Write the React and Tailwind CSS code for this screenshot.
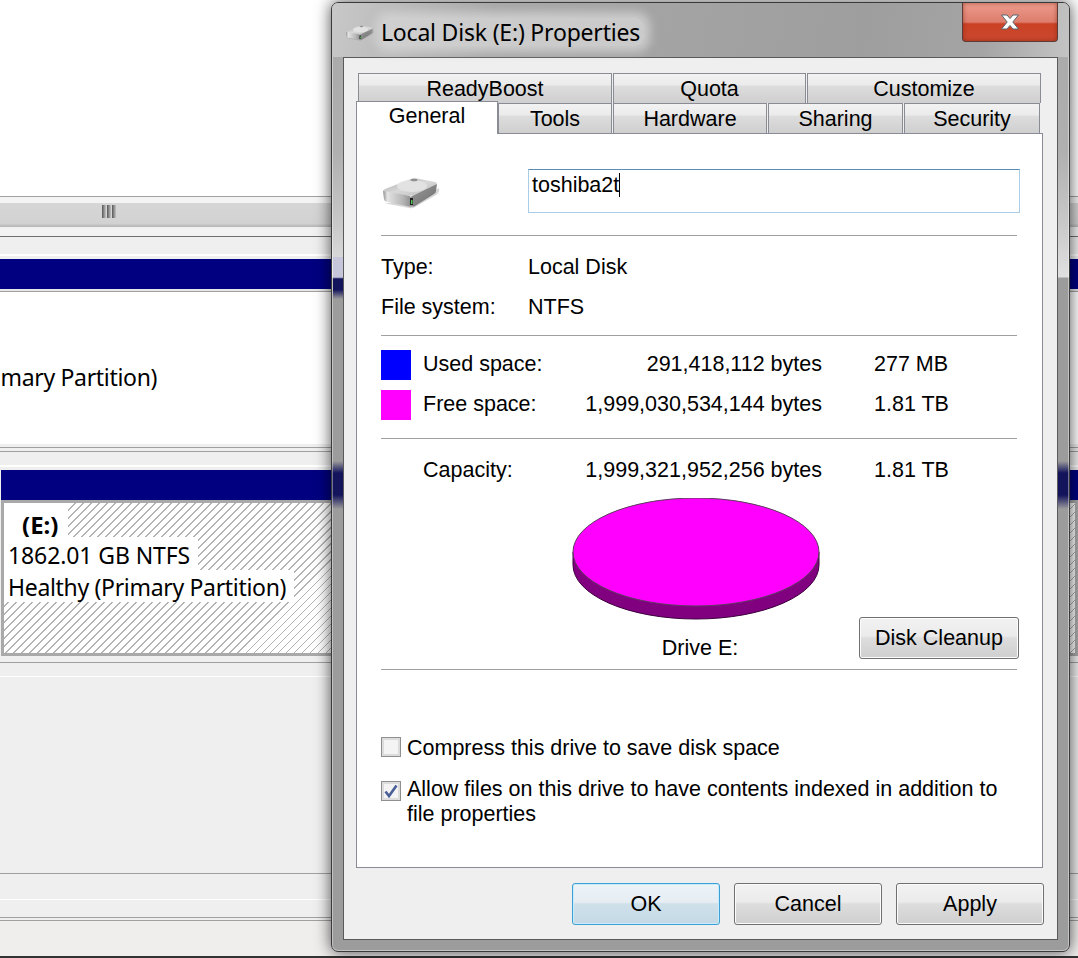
const ui = { fontFamily: '"Liberation Sans", Arial, sans-serif' };
const segoe = { fontFamily: '"Noto Sans", "Open Sans", sans-serif' };

function DriveIcon({ className }) {
  return (
    <svg viewBox="0 0 60 36" className={className}>
      <defs>
        <linearGradient id="driveFront" x1="0" y1="0" x2="1" y2="0">
          <stop offset="0" stopColor="#8e8e8e" />
          <stop offset="0.15" stopColor="#e4e4e4" />
          <stop offset="0.7" stopColor="#b4b4b4" />
          <stop offset="1" stopColor="#8a8a8a" />
        </linearGradient>
        <linearGradient id="driveTop" x1="0" y1="0" x2="1" y2="1">
          <stop offset="0" stopColor="#a9a9a9" />
          <stop offset="0.5" stopColor="#d8d8d8" />
          <stop offset="1" stopColor="#bdbdbd" />
        </linearGradient>
        <linearGradient id="driveSide" x1="0" y1="0" x2="1" y2="1">
          <stop offset="0" stopColor="#9a9a9a" />
          <stop offset="1" stopColor="#6e6e6e" />
        </linearGradient>
      </defs>
      <path d="M3 30 L28 35 Q31 36 34 34 L55 22 Q59 19 58 15 L30 30 Z" fill="#8a8a8a" opacity="0.35" />
      <path d="M2 18 Q2 17 4 16 L30 6 Q33 5 36 5.5 L54 9 Q57 10 55 12 L33 22 Q30 23 27 22.5 L5 20 Z" fill="url(#driveTop)" />
      <ellipse cx="31" cy="13" rx="15" ry="6" fill="#e2e2e2" />
      <ellipse cx="33" cy="7" rx="3.5" ry="1.3" fill="#8f8f8f" />
      <path d="M2 18 L27 22.5 Q30 23 30 25 L31 33 Q31 34 28 33.5 L6 29 Q3 28 3 26 Z" fill="url(#driveFront)" />
      <path d="M30 23.5 L56 11 L55 18 Q55 20 53 21 L34 33 Q32 34 31 33 Z" fill="url(#driveSide)" />
      <rect x="29" y="25" width="3" height="7" fill="#222222" />
      <rect x="30" y="27" width="1.5" height="4" fill="#4fc454" />
    </svg>
  );
}

function Rule({ className = "" }) {
  return <div className={`h-px bg-[#a0a0a0] ${className}`} />;
}

function TopTab({ label, className }) {
  return (
    <div className={`flex items-center justify-center border-t border-r border-l border-[#898c95] bg-[linear-gradient(#f2f2f2_0%,#ebebeb_38%,#dddddd_42%,#cfcfcf_100%)] pt-px text-[21.5px] text-black ${className}`}>
      {label}
    </div>
  );
}

function Swatch({ color }) {
  return <div className={`h-[30px] w-[30px] ${color}`} />;
}

function SpaceRow({ label, bytes, size, children, className }) {
  return (
    <div className={`flex items-center ${className}`}>
      <div className="w-[42px]">{children}</div>
      <div className="-mt-[2px] w-[140px]">{label}</div>
      <div className="-mt-[2px] w-[259px] text-right">{bytes}</div>
      <div className="-mt-[2px] ml-[52px]">{size}</div>
    </div>
  );
}

function WinButton({ label, className, focused }) {
  const tone = focused
    ? "border-[#3c9fd6] bg-[linear-gradient(#edf3f7_0%,#e6eef3_45%,#cfe0ea_50%,#c4d9e5_100%)] shadow-[inset_0_0_0_1px_#c8ecfa]"
    : "border-[#707070] bg-[linear-gradient(#f2f2f2_0%,#ebebeb_45%,#dddddd_50%,#cfcfcf_100%)] shadow-[inset_0_0_0_1px_#fcfcfc]";
  return (
    <div className={`flex items-center justify-center rounded-[3px] border text-[21.5px] text-black ${tone} ${className}`}>
      {label}
    </div>
  );
}

function CheckBox({ checked }) {
  return (
    <div className="flex h-5 w-5 shrink-0 items-center justify-center border border-[#8e8f8f] bg-[#f4f4f4] shadow-[inset_0_0_0_2px_#dcdcdc]">
      {checked && (
        <svg viewBox="0 0 16 16" className="h-4 w-4">
          <path d="M2.5 8.5 L6 13 L13.5 2.5" fill="none" stroke="#4a5f97" strokeWidth="2.6" />
        </svg>
      )}
    </div>
  );
}

function PieChart() {
  return (
    <svg viewBox="0 0 248 124" className="h-[124px] w-[248px]">
      <path d="M1 54 V67 A123 54 0 0 0 247 67 V54 Z" fill="#800080" stroke="#3d003d" strokeWidth="1" />
      <ellipse cx="124" cy="54" rx="123" ry="54" fill="#ff00ff" stroke="#5c3a5c" strokeWidth="1" />
    </svg>
  );
}

function BackgroundWindow() {
  return (
    <div className="flex h-[958px] w-[1078px] flex-col bg-[#efefef]">
      <div className="h-[196px] shrink-0 bg-white" />
      <div className="h-px shrink-0 bg-[#a0a0a0]" />
      <div className="h-[6px] shrink-0 bg-[#f4f4f4]" />
      <div className="flex h-[24px] shrink-0 items-center justify-center bg-[linear-gradient(#d6d6d6_0%,#d2d2d2_85%,#b4b4b4_100%)] pr-[860px] pb-[7px]">
        <div className="flex h-[13px] w-[15px] gap-[1px]">
          <div className="w-[4px] bg-[linear-gradient(90deg,#555555,#c4c4c4)]" />
          <div className="w-[4px] bg-[linear-gradient(90deg,#555555,#c4c4c4)]" />
          <div className="w-[4px] bg-[linear-gradient(90deg,#555555,#c4c4c4)]" />
        </div>
      </div>
      <div className="h-[9px] shrink-0 bg-[#f2f2f2]" />
      <div className="h-px shrink-0 bg-[#6e6e6e]" />
      <div className="h-[17px] shrink-0" />
      <div className="h-[2px] shrink-0 bg-white" />
      <div className="h-[3px] shrink-0" />
      <div className="h-[30px] shrink-0 bg-[#000080]" />
      <div className="h-[2px] shrink-0 bg-[#e6e6e6]" />
      <div className="h-px shrink-0 bg-[#a0a0a0]" />
      <div className="flex h-[152px] shrink-0 items-center bg-white pt-[18px] text-[23px] text-black" style={segoe}>
        <div className="-ml-[121px] whitespace-nowrap tracking-[-0.32px]">Healthy (Primary Partition)</div>
      </div>
      <div className="h-[3px] shrink-0" />
      <div className="h-px shrink-0 bg-[#a0a0a0]" />
      <div className="h-[3px] shrink-0" />
      <div className="h-px shrink-0 bg-[#a0a0a0]" />
      <div className="h-[13px] shrink-0" />
      <div className="h-[2px] shrink-0 bg-white" />
      <div className="h-[3px] shrink-0" />
      <div className="ml-px h-[30px] shrink-0 bg-[#000080]" />
      <div className="ml-px flex h-[156px] shrink-0 border-[3px] border-[#a9a9a9] bg-[repeating-linear-gradient(135deg,#ffffff_0px,#ffffff_4.8px,#b4b4b4_4.8px,#b4b4b4_5.66px)] text-[23px] text-black" style={segoe}>
        <div className="flex flex-col items-start">
          <div className="flex h-[34px] w-[64px] items-center bg-white pt-[10px] pl-[18px] text-[24px] font-bold">(E:)</div>
          <div className="flex h-[33px] items-center bg-white pt-[3px] pr-2 pl-[4px] tracking-[-0.1px]">1862.01 GB NTFS</div>
          <div className="flex h-[32px] items-center bg-white pt-[3px] pr-2 pl-[4px] tracking-[-0.32px]">Healthy (Primary Partition)</div>
        </div>
      </div>
      <div className="h-[6px] shrink-0" />
      <div className="h-px shrink-0 bg-[#a0a0a0]" />
      <div className="h-[13px] shrink-0" />
      <div className="h-px shrink-0 bg-white" />
      <div className="h-[196px] shrink-0" />
      <div className="h-px shrink-0 bg-[#a0a0a0]" />
      <div className="h-[25px] shrink-0" />
      <div className="h-px shrink-0 bg-white" />
      <div className="h-[17px] shrink-0" />
      <div className="h-px shrink-0 bg-[#a0a0a0]" />
      <div className="h-[2px] shrink-0" />
      <div className="h-px shrink-0 bg-[#a0a0a0]" />
      <div className="flex-1 bg-[#f0eded]" />
      <div className="h-[2px] shrink-0 bg-[#333333]" />
    </div>
  );
}

function GeneralPage() {
  return (
    <div className="h-[735px] border border-[#898c95] bg-white pt-[35px] pr-[25px] pl-[24px] text-[21.5px] text-black">
      <div className="flex h-[44px] items-center">
        <DriveIcon className="h-[36px] w-[60px] shrink-0" />
        <div className="ml-[87px] flex h-[44px] w-[492px] shrink-0 items-start border border-[#a9cde6] border-t-[#5b8db5] pt-[3px] pl-[3px]">
          <span className="border-r border-black leading-[24px]">toshiba2t</span>
        </div>
      </div>
      <Rule className="mt-[22px]" />
      <div className="mt-[20px] flex h-[23px] items-center">
        <div className="w-[147px]">Type:</div>
        <div>Local Disk</div>
      </div>
      <div className="mt-[17px] flex h-[23px] items-center">
        <div className="w-[147px]">File system:</div>
        <div>NTFS</div>
      </div>
      <Rule className="mt-[16px]" />
      <SpaceRow className="mt-[14px] h-[30px]" label="Used space:" bytes="291,418,112 bytes" size="277 MB">
        <Swatch color="bg-[#0000ff]" />
      </SpaceRow>
      <SpaceRow className="mt-[10px] h-[30px]" label="Free space:" bytes="1,999,030,534,144 bytes" size="1.81 TB">
        <Swatch color="bg-[#ff00ff]" />
      </SpaceRow>
      <Rule className="mt-[18px]" />
      <SpaceRow className="mt-[20px] h-[24px]" label="Capacity:" bytes="1,999,321,952,256 bytes" size="1.81 TB" />
      <div className="relative mt-[15px] h-[161px]">
        <div className="ml-[191px] w-[248px]">
          <PieChart />
          <div className="mt-[14px] pl-[8px] text-center leading-[24px]">Drive E:</div>
        </div>
        <WinButton label="Disk Cleanup" className="absolute top-[119px] left-[478px] h-[42px] w-[160px]" />
      </div>
      <Rule className="mt-[10px]" />
      <div className="mt-[67px] flex h-5 items-center gap-[6px]">
        <CheckBox />
        <div className="pt-[2px] leading-[24px]">Compress this drive to save disk space</div>
      </div>
      <div className="mt-[24px] flex items-start gap-[6px]">
        <CheckBox checked />
        <div className="-mt-[4px] w-[610px] leading-[25px]">
          Allow files on this drive to have contents indexed in addition to file properties
        </div>
      </div>
    </div>
  );
}

function PropertiesDialog() {
  return (
    <div className="absolute top-[2px] left-[331px] h-[950px] w-[739px] rounded-[7px] border border-[#3a3a3a] bg-[linear-gradient(180deg,#a8a8a8_0px,#b0b0b0_150px,#c8c8c8_220px,#e0e0e0_274px,#9c9c9c_275px,#9c9c9c_458px,#14145c_470px,#14145c_492px,#9c9c9c_506px,#9c9c9c_100%)] shadow-[0_0_16px_rgba(0,0,0,0.7)] ring-1 ring-inset ring-white/40">
      {/* blurred navy band that shows through the glass on the left edge only */}
      <div className="absolute top-[254px] left-px h-[42px] w-[10px] bg-[linear-gradient(180deg,#c6c6da_0%,#c6c6da_48%,#14145c_52%,#14145c_78%,#9c9c9c_100%)]" />
      <div className="flex h-[54px] items-center rounded-t-[6px] bg-[linear-gradient(100deg,#c8c8c8_0%,#a8a8a8_22%,#9e9e9e_72%,#a4a4a4_88%,#c4c4c4_100%)] pt-[3px] pl-[13px]">
        <DriveIcon className="h-[18px] w-[30px]" />
        <div
          className="ml-[6px] rounded-[8px] bg-[#d4d4d4]/80 pr-1 text-[23px] leading-[28px] tracking-[-0.2px] whitespace-nowrap text-black shadow-[0_0_10px_6px_rgba(212,212,212,0.8)]"
          style={segoe}
        >
          Local Disk (E:) Properties
        </div>
      </div>
      <div className="absolute top-0 right-[11px] flex h-[39px] w-[96px] items-center justify-center rounded-b-[4px] border border-t-0 border-[#5c3a35] bg-[linear-gradient(#ed9c8d_0%,#dd7d6d_50%,#cc4125_55%,#c9492f_100%)] shadow-[inset_0_0_4px_rgba(120,30,10,0.6)]">
        <svg viewBox="0 0 20 16" className="h-[16px] w-[20px]">
          <path d="M1.5 1 H7 L10 4.5 L13 1 H18.5 L12.8 8 L18.5 15 H13 L10 11.5 L7 15 H1.5 L7.2 8 Z" fill="#ffffff" stroke="#59656f" strokeWidth="1" />
        </svg>
      </div>
      <div className="ml-[11px] h-[883px] w-[715px] border border-[#5a5a5a] bg-[#efefef] pt-[15px] pl-[12px]" style={ui}>
        <div className="flex h-[30px] pl-[2px]">
          <TopTab label="ReadyBoost" className="w-[254px]" />
          <TopTab label="Quota" className="ml-px w-[193px]" />
          <TopTab label="Customize" className="ml-px w-[234px]" />
        </div>
        <div className="relative flex h-[30px] pl-[142px]">
          <TopTab label="Tools" className="w-[114px]" />
          <TopTab label="Hardware" className="ml-px w-[154px]" />
          <TopTab label="Sharing" className="ml-px w-[135px]" />
          <TopTab label="Security" className="ml-px w-[136px]" />
          <div className="absolute -top-[2px] left-0 z-10 flex h-[33px] w-[142px] items-start justify-center border-t border-r border-l border-[#898c95] bg-white text-[21.5px] leading-[28px] text-black">
            General
          </div>
        </div>
        <div className="w-[687px]">
          <GeneralPage />
        </div>
        <div className="mt-[15px] flex w-[688px] justify-end gap-[14px]">
          <WinButton focused label="OK" className="h-[42px] w-[148px]" />
          <WinButton label="Cancel" className="h-[42px] w-[148px]" />
          <WinButton label="Apply" className="h-[42px] w-[148px]" />
        </div>
      </div>
    </div>
  );
}

export default function App() {
  return (
    <div className="relative h-[958px] w-[1078px] overflow-hidden">
      <BackgroundWindow />
      <PropertiesDialog />
    </div>
  );
}
